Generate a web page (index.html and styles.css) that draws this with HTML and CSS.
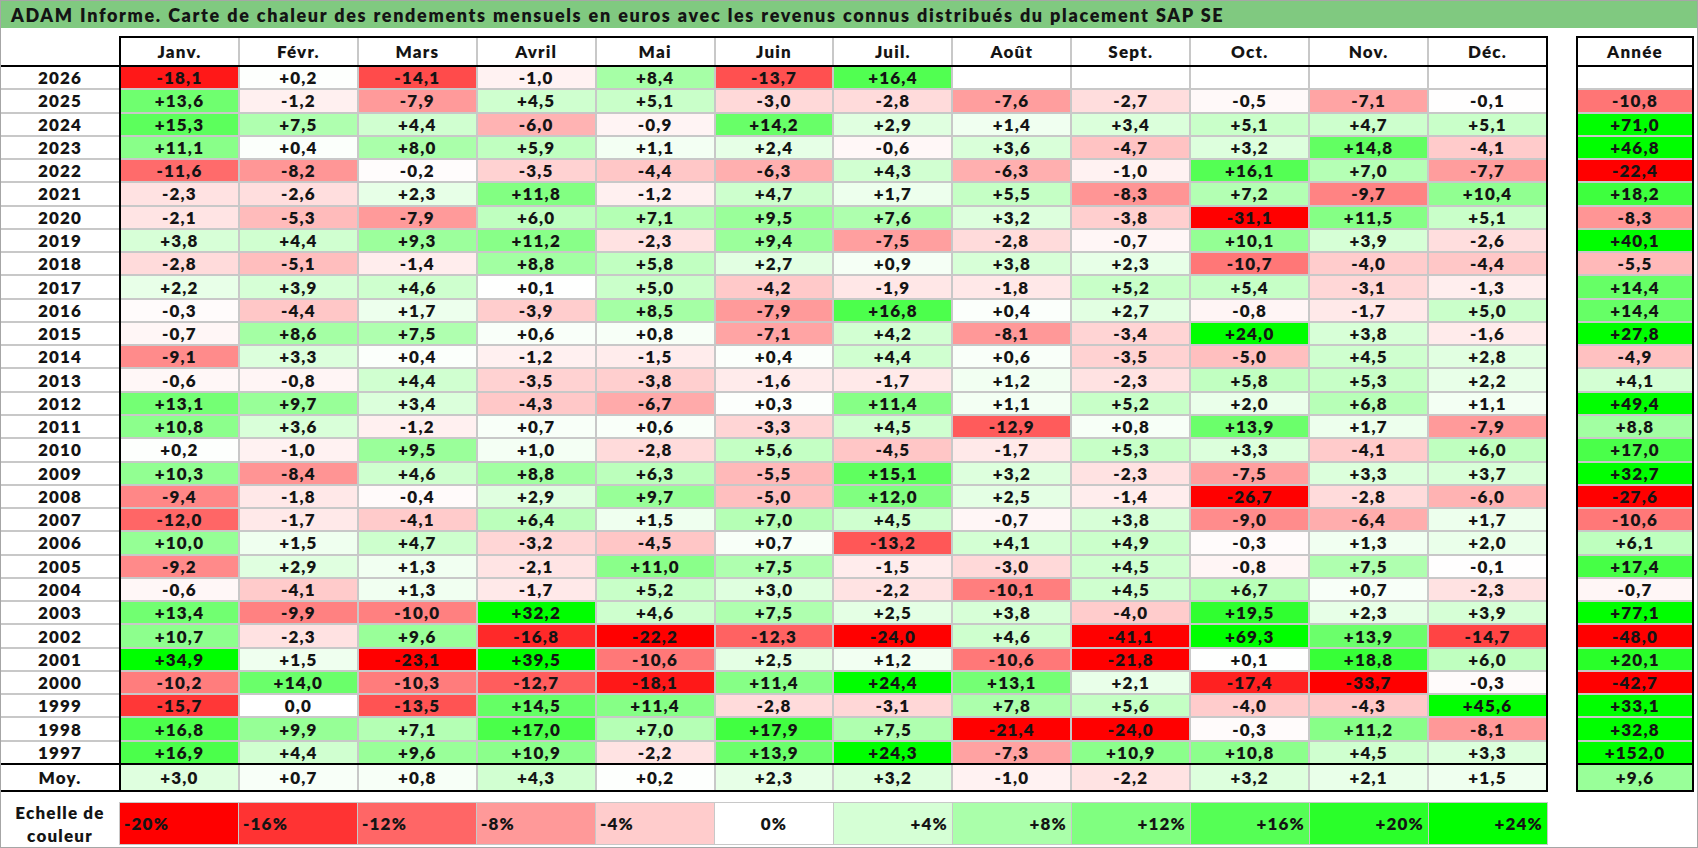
FILE: index.html
```html
<!DOCTYPE html>
<html lang="fr">
<head>
<meta charset="utf-8">
<title>ADAM Informe - SAP SE</title>
<link rel="stylesheet" href="styles.css">
</head>
<body>
<div class="page">
  <div class="title">ADAM Informe. Carte de chaleur des rendements mensuels en euros avec les revenus connus distribués du placement SAP SE</div>
  <div class="sheet">
    <div class="labels">
      <div class="lhead"></div>
      <div class="body">
        <div class="c">2026</div><div class="c">2025</div><div class="c">2024</div><div class="c">2023</div><div class="c">2022</div><div class="c">2021</div><div class="c">2020</div><div class="c">2019</div><div class="c">2018</div><div class="c">2017</div>
        <div class="c">2016</div><div class="c">2015</div><div class="c">2014</div><div class="c">2013</div><div class="c">2012</div><div class="c">2011</div><div class="c">2010</div><div class="c">2009</div><div class="c">2008</div><div class="c">2007</div>
        <div class="c">2006</div><div class="c">2005</div><div class="c">2004</div><div class="c">2003</div><div class="c">2002</div><div class="c">2001</div><div class="c">2000</div><div class="c">1999</div><div class="c">1998</div><div class="c">1997</div>
      </div>
      <div class="lmoy c">Moy.</div>
    </div>

    <div class="panel months">
      <div class="head">
        <div class="c">Janv.</div><div class="c">Févr.</div><div class="c">Mars</div><div class="c">Avril</div><div class="c">Mai</div><div class="c">Juin</div><div class="c">Juil.</div><div class="c">Août</div><div class="c">Sept.</div><div class="c">Oct.</div><div class="c">Nov.</div><div class="c">Déc.</div>
      </div>
      <div class="body">
        <div class="c hv">-18,1</div><div class="c hv">+0,2</div><div class="c hv">-14,1</div><div class="c hv">-1,0</div><div class="c hv">+8,4</div><div class="c hv">-13,7</div><div class="c hv">+16,4</div><div class="c hv"></div><div class="c hv"></div><div class="c hv"></div><div class="c hv"></div><div class="c hv"></div>
        <div class="c hv">+13,6</div><div class="c hv">-1,2</div><div class="c hv">-7,9</div><div class="c hv">+4,5</div><div class="c hv">+5,1</div><div class="c hv">-3,0</div><div class="c hv">-2,8</div><div class="c hv">-7,6</div><div class="c hv">-2,7</div><div class="c hv">-0,5</div><div class="c hv">-7,1</div><div class="c hv">-0,1</div>
        <div class="c hv">+15,3</div><div class="c hv">+7,5</div><div class="c hv">+4,4</div><div class="c hv">-6,0</div><div class="c hv">-0,9</div><div class="c hv">+14,2</div><div class="c hv">+2,9</div><div class="c hv">+1,4</div><div class="c hv">+3,4</div><div class="c hv">+5,1</div><div class="c hv">+4,7</div><div class="c hv">+5,1</div>
        <div class="c hv">+11,1</div><div class="c hv">+0,4</div><div class="c hv">+8,0</div><div class="c hv">+5,9</div><div class="c hv">+1,1</div><div class="c hv">+2,4</div><div class="c hv">-0,6</div><div class="c hv">+3,6</div><div class="c hv">-4,7</div><div class="c hv">+3,2</div><div class="c hv">+14,8</div><div class="c hv">-4,1</div>
        <div class="c hv">-11,6</div><div class="c hv">-8,2</div><div class="c hv">-0,2</div><div class="c hv">-3,5</div><div class="c hv">-4,4</div><div class="c hv">-6,3</div><div class="c hv">+4,3</div><div class="c hv">-6,3</div><div class="c hv">-1,0</div><div class="c hv">+16,1</div><div class="c hv">+7,0</div><div class="c hv">-7,7</div>
        <div class="c hv">-2,3</div><div class="c hv">-2,6</div><div class="c hv">+2,3</div><div class="c hv">+11,8</div><div class="c hv">-1,2</div><div class="c hv">+4,7</div><div class="c hv">+1,7</div><div class="c hv">+5,5</div><div class="c hv">-8,3</div><div class="c hv">+7,2</div><div class="c hv">-9,7</div><div class="c hv">+10,4</div>
        <div class="c hv">-2,1</div><div class="c hv">-5,3</div><div class="c hv">-7,9</div><div class="c hv">+6,0</div><div class="c hv">+7,1</div><div class="c hv">+9,5</div><div class="c hv">+7,6</div><div class="c hv">+3,2</div><div class="c hv">-3,8</div><div class="c hv">-31,1</div><div class="c hv">+11,5</div><div class="c hv">+5,1</div>
        <div class="c hv">+3,8</div><div class="c hv">+4,4</div><div class="c hv">+9,3</div><div class="c hv">+11,2</div><div class="c hv">-2,3</div><div class="c hv">+9,4</div><div class="c hv">-7,5</div><div class="c hv">-2,8</div><div class="c hv">-0,7</div><div class="c hv">+10,1</div><div class="c hv">+3,9</div><div class="c hv">-2,6</div>
        <div class="c hv">-2,8</div><div class="c hv">-5,1</div><div class="c hv">-1,4</div><div class="c hv">+8,8</div><div class="c hv">+5,8</div><div class="c hv">+2,7</div><div class="c hv">+0,9</div><div class="c hv">+3,8</div><div class="c hv">+2,3</div><div class="c hv">-10,7</div><div class="c hv">-4,0</div><div class="c hv">-4,4</div>
        <div class="c hv">+2,2</div><div class="c hv">+3,9</div><div class="c hv">+4,6</div><div class="c hv">+0,1</div><div class="c hv">+5,0</div><div class="c hv">-4,2</div><div class="c hv">-1,9</div><div class="c hv">-1,8</div><div class="c hv">+5,2</div><div class="c hv">+5,4</div><div class="c hv">-3,1</div><div class="c hv">-1,3</div>
        <div class="c hv">-0,3</div><div class="c hv">-4,4</div><div class="c hv">+1,7</div><div class="c hv">-3,9</div><div class="c hv">+8,5</div><div class="c hv">-7,9</div><div class="c hv">+16,8</div><div class="c hv">+0,4</div><div class="c hv">+2,7</div><div class="c hv">-0,8</div><div class="c hv">-1,7</div><div class="c hv">+5,0</div>
        <div class="c hv">-0,7</div><div class="c hv">+8,6</div><div class="c hv">+7,5</div><div class="c hv">+0,6</div><div class="c hv">+0,8</div><div class="c hv">-7,1</div><div class="c hv">+4,2</div><div class="c hv">-8,1</div><div class="c hv">-3,4</div><div class="c hv">+24,0</div><div class="c hv">+3,8</div><div class="c hv">-1,6</div>
        <div class="c hv">-9,1</div><div class="c hv">+3,3</div><div class="c hv">+0,4</div><div class="c hv">-1,2</div><div class="c hv">-1,5</div><div class="c hv">+0,4</div><div class="c hv">+4,4</div><div class="c hv">+0,6</div><div class="c hv">-3,5</div><div class="c hv">-5,0</div><div class="c hv">+4,5</div><div class="c hv">+2,8</div>
        <div class="c hv">-0,6</div><div class="c hv">-0,8</div><div class="c hv">+4,4</div><div class="c hv">-3,5</div><div class="c hv">-3,8</div><div class="c hv">-1,6</div><div class="c hv">-1,7</div><div class="c hv">+1,2</div><div class="c hv">-2,3</div><div class="c hv">+5,8</div><div class="c hv">+5,3</div><div class="c hv">+2,2</div>
        <div class="c hv">+13,1</div><div class="c hv">+9,7</div><div class="c hv">+3,4</div><div class="c hv">-4,3</div><div class="c hv">-6,7</div><div class="c hv">+0,3</div><div class="c hv">+11,4</div><div class="c hv">+1,1</div><div class="c hv">+5,2</div><div class="c hv">+2,0</div><div class="c hv">+6,8</div><div class="c hv">+1,1</div>
        <div class="c hv">+10,8</div><div class="c hv">+3,6</div><div class="c hv">-1,2</div><div class="c hv">+0,7</div><div class="c hv">+0,6</div><div class="c hv">-3,3</div><div class="c hv">+4,5</div><div class="c hv">-12,9</div><div class="c hv">+0,8</div><div class="c hv">+13,9</div><div class="c hv">+1,7</div><div class="c hv">-7,9</div>
        <div class="c hv">+0,2</div><div class="c hv">-1,0</div><div class="c hv">+9,5</div><div class="c hv">+1,0</div><div class="c hv">-2,8</div><div class="c hv">+5,6</div><div class="c hv">-4,5</div><div class="c hv">-1,7</div><div class="c hv">+5,3</div><div class="c hv">+3,3</div><div class="c hv">-4,1</div><div class="c hv">+6,0</div>
        <div class="c hv">+10,3</div><div class="c hv">-8,4</div><div class="c hv">+4,6</div><div class="c hv">+8,8</div><div class="c hv">+6,3</div><div class="c hv">-5,5</div><div class="c hv">+15,1</div><div class="c hv">+3,2</div><div class="c hv">-2,3</div><div class="c hv">-7,5</div><div class="c hv">+3,3</div><div class="c hv">+3,7</div>
        <div class="c hv">-9,4</div><div class="c hv">-1,8</div><div class="c hv">-0,4</div><div class="c hv">+2,9</div><div class="c hv">+9,7</div><div class="c hv">-5,0</div><div class="c hv">+12,0</div><div class="c hv">+2,5</div><div class="c hv">-1,4</div><div class="c hv">-26,7</div><div class="c hv">-2,8</div><div class="c hv">-6,0</div>
        <div class="c hv">-12,0</div><div class="c hv">-1,7</div><div class="c hv">-4,1</div><div class="c hv">+6,4</div><div class="c hv">+1,5</div><div class="c hv">+7,0</div><div class="c hv">+4,5</div><div class="c hv">-0,7</div><div class="c hv">+3,8</div><div class="c hv">-9,0</div><div class="c hv">-6,4</div><div class="c hv">+1,7</div>
        <div class="c hv">+10,0</div><div class="c hv">+1,5</div><div class="c hv">+4,7</div><div class="c hv">-3,2</div><div class="c hv">-4,5</div><div class="c hv">+0,7</div><div class="c hv">-13,2</div><div class="c hv">+4,1</div><div class="c hv">+4,9</div><div class="c hv">-0,3</div><div class="c hv">+1,3</div><div class="c hv">+2,0</div>
        <div class="c hv">-9,2</div><div class="c hv">+2,9</div><div class="c hv">+1,3</div><div class="c hv">-2,1</div><div class="c hv">+11,0</div><div class="c hv">+7,5</div><div class="c hv">-1,5</div><div class="c hv">-3,0</div><div class="c hv">+4,5</div><div class="c hv">-0,8</div><div class="c hv">+7,5</div><div class="c hv">-0,1</div>
        <div class="c hv">-0,6</div><div class="c hv">-4,1</div><div class="c hv">+1,3</div><div class="c hv">-1,7</div><div class="c hv">+5,2</div><div class="c hv">+3,0</div><div class="c hv">-2,2</div><div class="c hv">-10,1</div><div class="c hv">+4,5</div><div class="c hv">+6,7</div><div class="c hv">+0,7</div><div class="c hv">-2,3</div>
        <div class="c hv">+13,4</div><div class="c hv">-9,9</div><div class="c hv">-10,0</div><div class="c hv">+32,2</div><div class="c hv">+4,6</div><div class="c hv">+7,5</div><div class="c hv">+2,5</div><div class="c hv">+3,8</div><div class="c hv">-4,0</div><div class="c hv">+19,5</div><div class="c hv">+2,3</div><div class="c hv">+3,9</div>
        <div class="c hv">+10,7</div><div class="c hv">-2,3</div><div class="c hv">+9,6</div><div class="c hv">-16,8</div><div class="c hv">-22,2</div><div class="c hv">-12,3</div><div class="c hv">-24,0</div><div class="c hv">+4,6</div><div class="c hv">-41,1</div><div class="c hv">+69,3</div><div class="c hv">+13,9</div><div class="c hv">-14,7</div>
        <div class="c hv">+34,9</div><div class="c hv">+1,5</div><div class="c hv">-23,1</div><div class="c hv">+39,5</div><div class="c hv">-10,6</div><div class="c hv">+2,5</div><div class="c hv">+1,2</div><div class="c hv">-10,6</div><div class="c hv">-21,8</div><div class="c hv">+0,1</div><div class="c hv">+18,8</div><div class="c hv">+6,0</div>
        <div class="c hv">-10,2</div><div class="c hv">+14,0</div><div class="c hv">-10,3</div><div class="c hv">-12,7</div><div class="c hv">-18,1</div><div class="c hv">+11,4</div><div class="c hv">+24,4</div><div class="c hv">+13,1</div><div class="c hv">+2,1</div><div class="c hv">-17,4</div><div class="c hv">-33,7</div><div class="c hv">-0,3</div>
        <div class="c hv">-15,7</div><div class="c hv">0,0</div><div class="c hv">-13,5</div><div class="c hv">+14,5</div><div class="c hv">+11,4</div><div class="c hv">-2,8</div><div class="c hv">-3,1</div><div class="c hv">+7,8</div><div class="c hv">+5,6</div><div class="c hv">-4,0</div><div class="c hv">-4,3</div><div class="c hv">+45,6</div>
        <div class="c hv">+16,8</div><div class="c hv">+9,9</div><div class="c hv">+7,1</div><div class="c hv">+17,0</div><div class="c hv">+7,0</div><div class="c hv">+17,9</div><div class="c hv">+7,5</div><div class="c hv">-21,4</div><div class="c hv">-24,0</div><div class="c hv">-0,3</div><div class="c hv">+11,2</div><div class="c hv">-8,1</div>
        <div class="c hv">+16,9</div><div class="c hv">+4,4</div><div class="c hv">+9,6</div><div class="c hv">+10,9</div><div class="c hv">-2,2</div><div class="c hv">+13,9</div><div class="c hv">+24,3</div><div class="c hv">-7,3</div><div class="c hv">+10,9</div><div class="c hv">+10,8</div><div class="c hv">+4,5</div><div class="c hv">+3,3</div>
      </div>
      <div class="moyrow">
        <div class="c hv">+3,0</div><div class="c hv">+0,7</div><div class="c hv">+0,8</div><div class="c hv">+4,3</div><div class="c hv">+0,2</div><div class="c hv">+2,3</div><div class="c hv">+3,2</div><div class="c hv">-1,0</div><div class="c hv">-2,2</div><div class="c hv">+3,2</div><div class="c hv">+2,1</div><div class="c hv">+1,5</div>
      </div>
    </div>

    <div class="spacer"></div>

    <div class="panel year">
      <div class="head"><div class="c">Année</div></div>
      <div class="body">
        <div class="c hv"></div><div class="c hv">-10,8</div><div class="c hv">+71,0</div><div class="c hv">+46,8</div><div class="c hv">-22,4</div><div class="c hv">+18,2</div><div class="c hv">-8,3</div><div class="c hv">+40,1</div><div class="c hv">-5,5</div><div class="c hv">+14,4</div>
        <div class="c hv">+14,4</div><div class="c hv">+27,8</div><div class="c hv">-4,9</div><div class="c hv">+4,1</div><div class="c hv">+49,4</div><div class="c hv">+8,8</div><div class="c hv">+17,0</div><div class="c hv">+32,7</div><div class="c hv">-27,6</div><div class="c hv">-10,6</div>
        <div class="c hv">+6,1</div><div class="c hv">+17,4</div><div class="c hv">-0,7</div><div class="c hv">+77,1</div><div class="c hv">-48,0</div><div class="c hv">+20,1</div><div class="c hv">-42,7</div><div class="c hv">+33,1</div><div class="c hv">+32,8</div><div class="c hv">+152,0</div>
      </div>
      <div class="moyrow"><div class="c hv">+9,6</div></div>
    </div>
  </div>

  <div class="scale">
    <div class="scale-label">Echelle de<br>couleur</div>
    <div class="scale-cells">
      <div class="sc neg hv">-20%</div><div class="sc neg hv">-16%</div><div class="sc neg hv">-12%</div><div class="sc neg hv">-8%</div><div class="sc neg hv">-4%</div><div class="sc zero hv">0%</div>
      <div class="sc pos hv">+4%</div><div class="sc pos hv">+8%</div><div class="sc pos hv">+12%</div><div class="sc pos hv">+16%</div><div class="sc pos hv">+20%</div><div class="sc pos hv">+24%</div>
    </div>
  </div>
</div>
<script src="script.js"></script>
</body>
</html>
```

FILE: styles.css
```css
* { box-sizing: border-box; }

body {
  margin: 0;
  background: #ffffff;
  font-family: Lato, "Open Sans", "Liberation Sans", sans-serif;
  font-weight: 800;
  color: #141414;
}

.page {
  width: 1698px;
  height: 848px;
  border: 1px solid #a6a6a6;
  background: #ffffff;
  overflow: hidden;
}

.title {
  height: 27px;
  background: #80c980;
  padding-left: 10px;
  font-size: 18px;
  line-height: 28px;
  letter-spacing: 1.65px;
  word-spacing: 0.5px;
  white-space: nowrap;
}

.sheet {
  display: flex;
  margin-top: 8px;
}

.c {
  background: #ffffff;
  display: flex;
  align-items: center;
  justify-content: center;
  font-size: 17px;
  letter-spacing: 1.2px;
  white-space: nowrap;
}

/* row labels */
.labels {
  width: 118px;
  padding-top: 2px;
}
.lhead {
  height: 29px;
  border-bottom: 2px solid #000;
}
.lmoy {
  height: 29px;
  border-top: 2px solid #000;
  border-bottom: 2px solid #000;
}

.body {
  height: 696px;
  display: grid;
  grid-template-rows: repeat(30, 1fr);
  gap: 2px;
  background: #c8c8c8;
}

/* boxed panels */
.panel {
  border: 2px solid #000;
}
.months { width: 1429px; }
.year { width: 118px; }
.spacer { width: 28px; }

.head {
  height: 29px;
  border-bottom: 2px solid #000;
  display: grid;
  gap: 2px;
  background: #c8c8c8;
}
.moyrow {
  height: 27px;
  border-top: 2px solid #000;
  display: grid;
  gap: 2px;
  background: #c8c8c8;
}
.months .head,
.months .body,
.months .moyrow {
  grid-template-columns: repeat(12, 1fr);
}

/* colour scale */
.scale {
  display: flex;
  margin-top: 10px;
  height: 43px;
}
.scale-label {
  width: 118px;
  display: flex;
  align-items: center;
  justify-content: center;
  text-align: center;
  font-size: 17px;
  line-height: 23px;
  letter-spacing: 1.2px;
}
.scale-cells {
  width: 1429px;
  display: grid;
  grid-template-columns: repeat(12, 1fr);
  gap: 1px;
  background: #c8c8c8;
  border: 1px solid #c8c8c8;
}
.sc {
  background: #ffffff;
  display: flex;
  align-items: center;
  padding: 0 4px;
  font-size: 17px;
  letter-spacing: 1.2px;
}
.sc.neg { justify-content: flex-start; }
.sc.zero { justify-content: center; }
.sc.pos { justify-content: flex-end; }
```

FILE: script.js
```js
(function () {
  function heat(v) {
    var t, c;
    if (v >= 0) {
      t = Math.min(v / 24, 1);
      c = Math.round(255 * (1 - t));
      return 'rgb(' + c + ',255,' + c + ')';
    }
    t = Math.min(-v / 20, 1);
    c = Math.round(255 * (1 - t));
    return 'rgb(255,' + c + ',' + c + ')';
  }
  var cells = document.querySelectorAll('.hv');
  for (var i = 0; i < cells.length; i++) {
    var s = cells[i].textContent.trim().replace('%', '').replace(',', '.');
    if (!s) continue;
    var v = parseFloat(s);
    if (isNaN(v)) continue;
    cells[i].style.backgroundColor = heat(v);
  }
})();
```
